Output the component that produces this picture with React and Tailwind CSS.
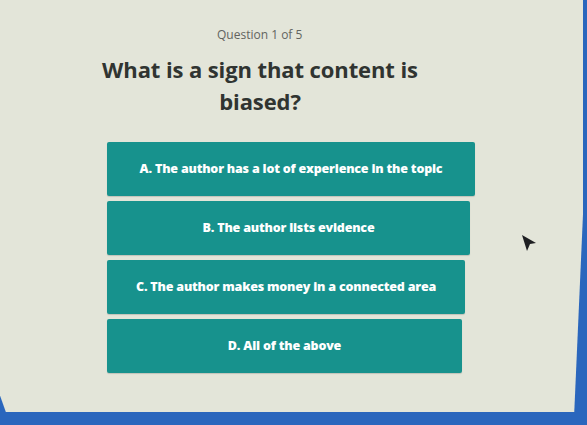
import React from 'react';

const options = [
  { id: 'A', text: 'The author has a lot of experience in the topic', w: 'w-[368px]' },
  { id: 'B', text: 'The author lists evidence', w: 'w-[363px]' },
  { id: 'C', text: 'The author makes money in a connected area', w: 'w-[358px]' },
  { id: 'D', text: 'All of the above', w: 'w-[355px]' },
];

const App = () => {
  return (
    <div className="relative w-[587px] h-[425px] overflow-hidden bg-[#2a66bd]">
      {/* Screen panel */}
      <div className="h-[412px] w-[583px] bg-[#e3e5d9] [clip-path:polygon(0_0,100%_0,100%_52%,98.5%_100%,1%_100%,0_96%)]">
        <div className="flex flex-col">
          <p className="mt-[27px] ml-[217px] text-[12px] leading-[16px] text-[#62645f] font-['Open_Sans',sans-serif]">
            Question 1 of 5
          </p>
          <h1 className="mt-[10px] w-[520px] text-center text-[22px] leading-[32px] font-bold text-[#303431] font-['Open_Sans',sans-serif] tracking-[-0.1px]">
            What is a sign that content is
            <br />
            biased?
          </h1>

          {/* Answers */}
          <div className="mt-[25px] ml-[107px] flex flex-col gap-[5px]">
            {options.map((o) => (
              <button
                key={o.id}
                className={`${o.w} h-[54px] flex items-center justify-center rounded-[2px] bg-[#17928d] text-white text-[12.5px] font-extrabold tracking-[-0.2px] font-['Open_Sans',sans-serif] shadow-[0_1px_1px_rgba(0,0,0,0.15)]`}
              >
                {o.id}. {o.text}
              </button>
            ))}
          </div>
        </div>
      </div>

      {/* Mouse cursor */}
      <svg
        className="absolute left-[521px] top-[234px]"
        width="16"
        height="18"
        viewBox="0 0 16 18"
      >
        <path d="M1 1 L15 9 L9 10 L6 17 Z" fill="#1e1f22" />
      </svg>
    </div>
  );
};

export default App;
